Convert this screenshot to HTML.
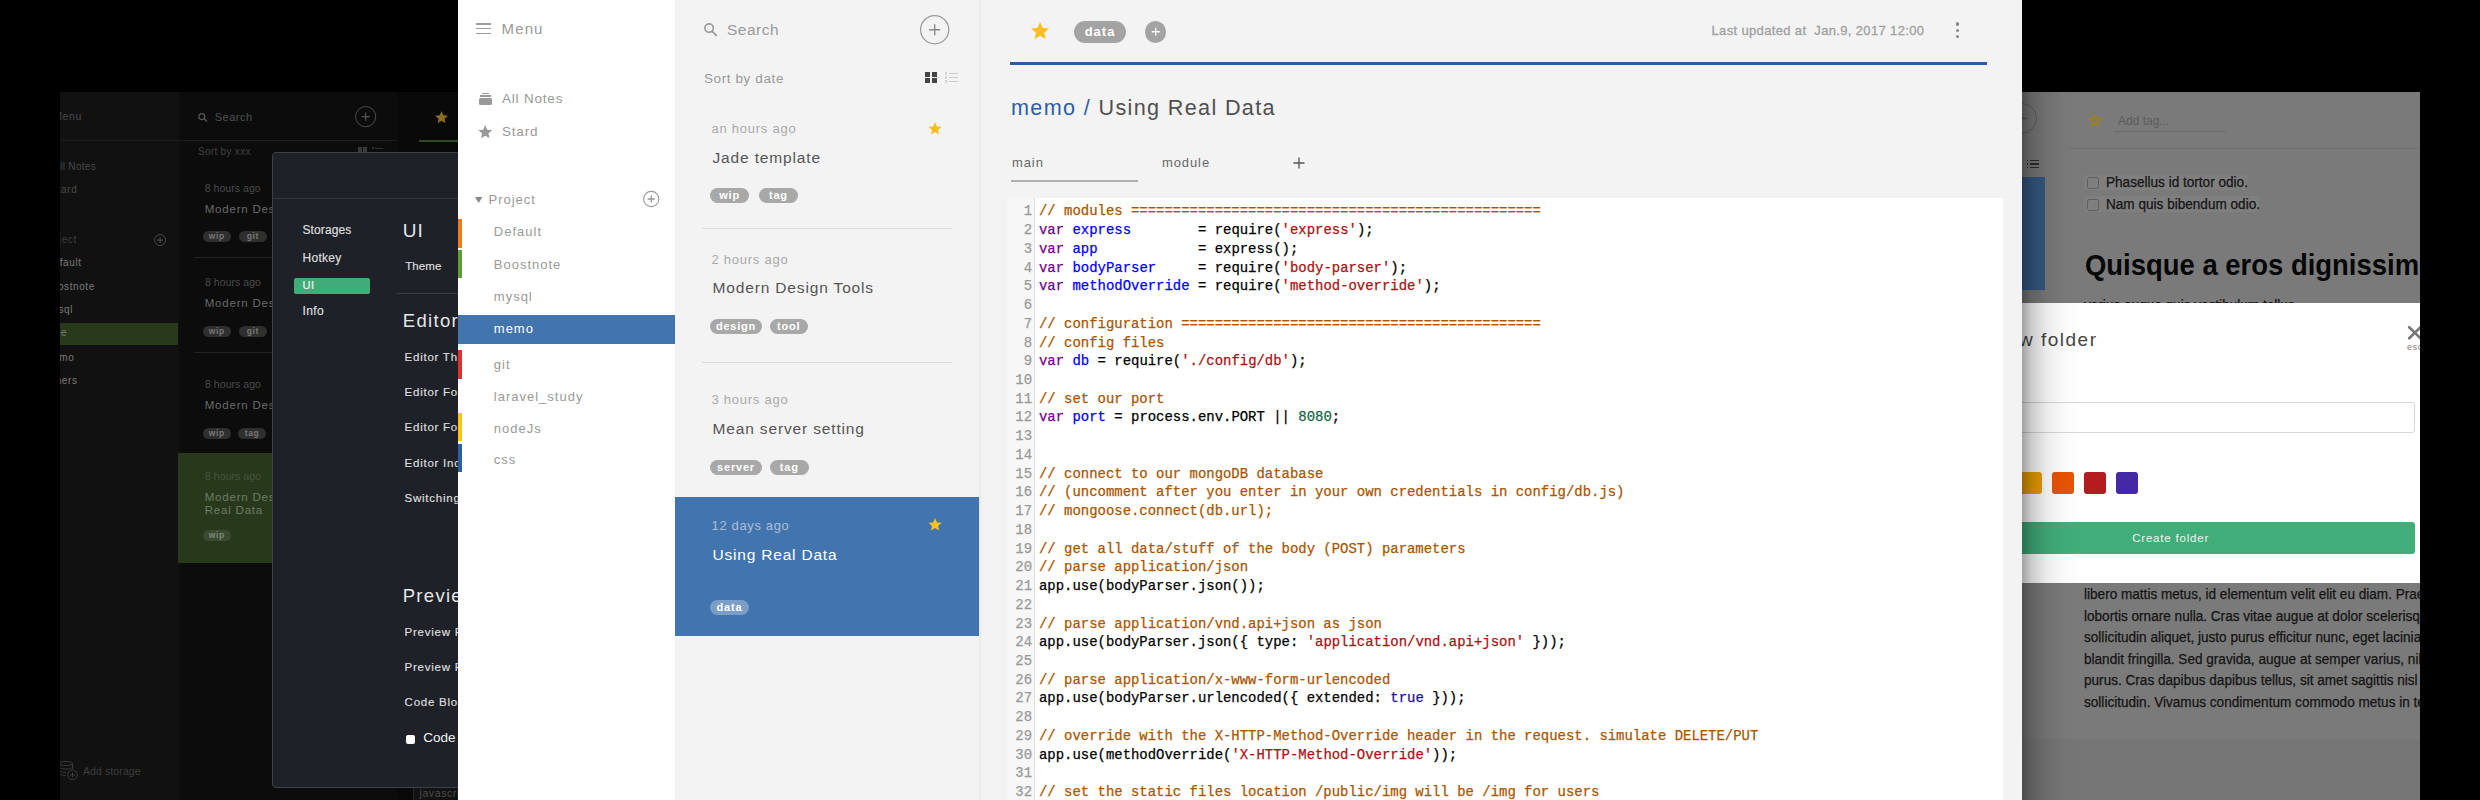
<!DOCTYPE html>
<html><head><meta charset="utf-8">
<style>
*{box-sizing:border-box;margin:0;padding:0}
html,body{width:2480px;height:800px;overflow:hidden;background:#000}
body{position:relative;font-family:"Liberation Sans",sans-serif}
.a{position:absolute}
.t{position:absolute;white-space:nowrap;line-height:1}
svg{position:absolute;overflow:visible}
/* middle */
#mid{left:458px;top:0;width:1564px;height:800px;background:#f3f3f3;overflow:hidden}
#side{left:0;top:0;width:217px;height:800px;background:#fff}
#list{left:217px;top:0;width:304px;height:800px;background:#f3f3f3;box-shadow:1px 0 3px rgba(0,0,0,.08)}
#dark{left:60px;top:92px;width:398px;height:708px;background:#0f0f0f;overflow:hidden}
#right{left:2022px;top:92px;width:398px;height:708px;background:#7a7a7a;overflow:hidden}
.code{font-family:"Liberation Mono",monospace;font-size:13.95px;line-height:18.74px;white-space:pre;color:#000;-webkit-text-stroke:0.25px}
.cm-c{color:#a50}.cm-k{color:#708}.cm-d{color:#00f}.cm-s{color:#a11}.cm-n{color:#164}.cm-a{color:#219}
.tag{position:absolute;height:15px;border-radius:8px;background:#a8a8a8;color:#fff;font-weight:bold;font-size:11px;line-height:15px;text-align:center;letter-spacing:.8px}
</style></head><body>

<!-- ================= DARK LEFT ================= -->
<div id="dark" class="a">
<div class="a" style="left:0.00px;top:0.00px;width:119.00px;height:708.00px;background:#111111;"></div><div class="a" style="left:119.00px;top:0.00px;width:218.00px;height:708.00px;background:#0c0c0c;"></div><div class="a" style="left:337.00px;top:0.00px;width:61.00px;height:708.00px;background:#090909;"></div><div class="a" style="left:0.00px;top:48.00px;width:337.00px;height:1.00px;background:#1c1c1c;"></div>
<div class="a" style="left:359.00px;top:48.00px;width:39.00px;height:2.00px;background:#2f4a1f;"></div>
<div class="t" style="right:376.10px;top:19.11px;font-size:10.5px;color:#4a4a4a;letter-spacing:0.6px;font-weight:normal;text-align:right">Menu</div>
<div class="t" style="right:362.00px;top:70.03px;font-size:10px;color:#474747;letter-spacing:0.3px;font-weight:normal;text-align:right">All Notes</div>
<div class="t" style="right:380.70px;top:93.28px;font-size:10px;color:#4a4a4a;letter-spacing:0.6px;font-weight:normal;text-align:right">Stard</div>
<div class="t" style="right:381.20px;top:143.23px;font-size:10px;color:#3e3e3e;letter-spacing:0.6px;font-weight:normal;text-align:right">Project</div>
<svg style="left:93.80000000000001px;top:141.5px" width="12.2" height="12.2"><circle cx="6.1" cy="6.1" r="5.5" fill="none" stroke="#4a4a4a" stroke-width="1"/><path d="M3.3 6.1H8.9M6.1 3.3V8.9" stroke="#4a4a4a" stroke-width="1.1"/></svg>
<div class="a" style="left:0.00px;top:231.10px;width:117.50px;height:21.50px;background:#283a1b;"></div>
<div class="t" style="right:376.40px;top:165.94px;font-size:10px;color:#7a7a7a;letter-spacing:0.6px;font-weight:normal;text-align:right">Default</div>
<div class="t" style="right:363.10px;top:189.54px;font-size:10px;color:#7a7a7a;letter-spacing:0.6px;font-weight:normal;text-align:right">Boostnote</div>
<div class="t" style="right:385.00px;top:212.54px;font-size:10px;color:#7a7a7a;letter-spacing:0.6px;font-weight:normal;text-align:right">mysql</div>
<div class="t" style="right:390.90px;top:236.04px;font-size:10px;color:#7a7a7a;letter-spacing:0.6px;font-weight:normal;text-align:right">Jade</div>
<div class="t" style="right:383.70px;top:260.54px;font-size:10px;color:#7a7a7a;letter-spacing:0.6px;font-weight:normal;text-align:right">memo</div>
<div class="t" style="right:380.50px;top:284.24px;font-size:10px;color:#7a7a7a;letter-spacing:0.6px;font-weight:normal;text-align:right">Others</div>
<svg style="left:-2px;top:668.6px" width="20" height="20" viewBox="0 0 20 20"><g fill="none" stroke="#3c3c3c" stroke-width="1"><ellipse cx="8" cy="2.5" rx="6.5" ry="2"/><path d="M1.5 2.5V12.5C1.5 13.6 4.5 14.5 8 14.5M14.5 2.5V8M1.5 6C1.5 7.1 4.5 8 8 8S14.5 7.1 14.5 6M1.5 9.5C1.5 10.6 4.5 11.5 8 11.5"/><circle cx="14.5" cy="14" r="4.8"/><path d="M12 14H17M14.5 11.5V16.5"/></g></svg>
<div class="t" style="left:23.00px;top:673.91px;font-size:10.5px;color:#3e3e3e;letter-spacing:0.1px;font-weight:normal;">Add storage</div>
<svg style="left:138px;top:21px" width="10" height="9" viewBox="0 0 10 9"><circle cx="3.8" cy="3.6" r="3" fill="none" stroke="#555" stroke-width="1.3"/><path d="M6 5.8L9 8.6" stroke="#555" stroke-width="1.4"/></svg>
<div class="t" style="left:154.70px;top:19.69px;font-size:11px;color:#505050;letter-spacing:0.5px;font-weight:normal;">Search</div>
<svg style="left:294.5px;top:14px" width="21.3" height="21.3"><circle cx="10.65" cy="10.65" r="10.1" fill="none" stroke="#4e4e4e" stroke-width="1"/><path d="M6.6 10.65H14.7M10.65 6.6V14.7" stroke="#555" stroke-width="1.2"/></svg>
<div class="t" style="left:138.00px;top:55.03px;font-size:10px;color:#404040;letter-spacing:0.3px;font-weight:normal;">Sort by xxx</div>
<div class="a" style="left:298.00px;top:55.00px;width:4.00px;height:5.00px;background:#3a3a3a;"></div><div class="a" style="left:303.00px;top:55.00px;width:4.00px;height:5.00px;background:#3a3a3a;"></div><div class="a" style="left:312.00px;top:55.00px;width:2.00px;height:2.00px;background:#303030;"></div><div class="a" style="left:315.00px;top:55.50px;width:8.00px;height:1.00px;background:#303030;"></div>
<div class="t" style="left:144.70px;top:90.81px;font-size:10.5px;color:#4a4a4a;letter-spacing:0.05px;font-weight:normal;">8 hours ago</div>
<div class="t" style="left:144.70px;top:111.57px;font-size:11.5px;color:#6a6a6a;letter-spacing:0.8px;font-weight:normal;">Modern Design Tools</div>
<div class="tag" style="left:142.6px;top:139.4px;width:28.30000000000001px;height:10.599999999999994px;line-height:10.599999999999994px;background:#2f2f2f;color:#777;font-size:8.5px;letter-spacing:.6px">wip</div><div class="tag" style="left:178.7px;top:139.4px;width:28.100000000000023px;height:10.599999999999994px;line-height:10.599999999999994px;background:#2f2f2f;color:#777;font-size:8.5px;letter-spacing:.6px">git</div>
<div class="a" style="left:134.00px;top:164.50px;width:203.00px;height:1.00px;background:#232323;"></div>
<div class="t" style="left:145.00px;top:185.11px;font-size:10.5px;color:#4a4a4a;letter-spacing:0.05px;font-weight:normal;">8 hours ago</div>
<div class="t" style="left:144.70px;top:206.07px;font-size:11.5px;color:#6a6a6a;letter-spacing:0.8px;font-weight:normal;">Modern Design Tools</div>
<div class="tag" style="left:142.6px;top:233.64999999999998px;width:28.200000000000017px;height:11.25px;line-height:11.25px;background:#2f2f2f;color:#777;font-size:8.5px;letter-spacing:.6px">wip</div><div class="tag" style="left:178.6px;top:233.64999999999998px;width:28.50000000000003px;height:11.25px;line-height:11.25px;background:#2f2f2f;color:#777;font-size:8.5px;letter-spacing:.6px">git</div>
<div class="a" style="left:134.00px;top:260.00px;width:203.00px;height:1.00px;background:#232323;"></div>
<div class="t" style="left:145.00px;top:287.41px;font-size:10.5px;color:#4a4a4a;letter-spacing:0.05px;font-weight:normal;">8 hours ago</div>
<div class="t" style="left:144.70px;top:308.27px;font-size:11.5px;color:#6a6a6a;letter-spacing:0.8px;font-weight:normal;">Modern Design Tools</div>
<div class="tag" style="left:142.6px;top:336.2px;width:28.30000000000001px;height:10.800000000000011px;line-height:10.800000000000011px;background:#2f2f2f;color:#777;font-size:8.5px;letter-spacing:.6px">wip</div><div class="tag" style="left:178px;top:336.2px;width:28px;height:10.800000000000011px;line-height:10.800000000000011px;background:#2f2f2f;color:#777;font-size:8.5px;letter-spacing:.6px">tag</div>
<div class="a" style="left:118.00px;top:361.00px;width:219.00px;height:109.60px;background:#27391a;"></div>
<div class="t" style="left:145.00px;top:378.81px;font-size:10.5px;color:#46533c;letter-spacing:0.05px;font-weight:normal;">8 hours ago</div>
<div class="t" style="left:144.70px;top:399.77px;font-size:11.5px;color:#6f7a66;letter-spacing:0.8px;font-weight:normal;">Modern Design Using</div>
<div class="t" style="left:144.70px;top:413.27px;font-size:11.5px;color:#6f7a66;letter-spacing:0.8px;font-weight:normal;">Real Data</div>
<div class="tag" style="left:142.6px;top:437.79999999999995px;width:28.30000000000001px;height:11.100000000000023px;line-height:11.100000000000023px;background:#3b4a30;color:#7e8a74;font-size:8.5px;letter-spacing:.6px">wip</div>
<svg style="left:374.8px;top:19.099999999999994px" width="13.1" height="12.4" viewBox="2 2 20 19.2"><path fill="#8a6d1f" d="M12 17.27L18.18 21l-1.64-7.03L22 9.24l-7.19-.61L12 2 9.19 8.63 2 9.24l5.46 4.73L5.82 21z"/></svg>
<div class="a" style="left:352.5px;top:694px;width:80px;height:30px;border:1px solid #262626;background:#121212"></div><div class="t" style="left:359.50px;top:696.11px;font-size:10.5px;color:#4d4d4d;letter-spacing:0.6px;font-weight:normal;">javascript</div>
<div class="a" style="left:212px;top:59.5px;width:300px;height:636.0px;background:#1e2128;border:1px solid #3c3f46;border-radius:4px"></div>
<div class="a" style="left:213.00px;top:106.20px;width:185.00px;height:1.00px;background:#34373c;"></div>
<div class="a" style="left:233.90px;top:185.90px;width:75.90px;height:15.80px;background:#40ad79;border-radius:2px"></div>
<div class="t" style="left:242.50px;top:132.24px;font-size:12px;color:#dcdcdc;letter-spacing:0.1px;font-weight:normal;-webkit-text-stroke:0.2px">Storages</div>
<div class="t" style="left:242.50px;top:159.54px;font-size:12px;color:#dcdcdc;letter-spacing:0.3px;font-weight:normal;-webkit-text-stroke:0.2px">Hotkey</div>
<div class="t" style="left:242.50px;top:188.29px;font-size:11px;color:#f0f0f0;letter-spacing:0.5px;font-weight:normal;-webkit-text-stroke:0.2px">UI</div>
<div class="t" style="left:242.50px;top:212.64px;font-size:12px;color:#dcdcdc;letter-spacing:0.4px;font-weight:normal;-webkit-text-stroke:0.2px">Info</div>
<div class="t" style="left:342.80px;top:128.72px;font-size:19px;color:#e6e6e6;letter-spacing:1px;font-weight:normal;">UI</div>
<div class="t" style="left:345.20px;top:169.27px;font-size:11.5px;color:#dcdcdc;letter-spacing:0.1px;font-weight:normal;-webkit-text-stroke:0.2px">Theme</div>
<div class="a" style="left:337.10px;top:200.70px;width:60.90px;height:1.00px;background:#3a3c40;"></div>
<div class="t" style="left:342.80px;top:219.64px;font-size:18.5px;color:#e6e6e6;letter-spacing:1.3px;font-weight:normal;">Editor</div>
<div class="t" style="left:344.60px;top:259.67px;font-size:11.5px;color:#dcdcdc;letter-spacing:0.75px;font-weight:normal;-webkit-text-stroke:0.2px">Editor Theme</div>
<div class="t" style="left:344.60px;top:294.97px;font-size:11.5px;color:#dcdcdc;letter-spacing:0.75px;font-weight:normal;-webkit-text-stroke:0.2px">Editor Font Size</div>
<div class="t" style="left:344.60px;top:330.27px;font-size:11.5px;color:#dcdcdc;letter-spacing:0.75px;font-weight:normal;-webkit-text-stroke:0.2px">Editor Font Family</div>
<div class="t" style="left:344.60px;top:365.87px;font-size:11.5px;color:#dcdcdc;letter-spacing:0.75px;font-weight:normal;-webkit-text-stroke:0.2px">Editor Indent Style</div>
<div class="t" style="left:344.60px;top:400.77px;font-size:11.5px;color:#dcdcdc;letter-spacing:0.75px;font-weight:normal;-webkit-text-stroke:0.2px">Switching Preview</div>
<div class="t" style="left:342.70px;top:494.64px;font-size:18.5px;color:#e6e6e6;letter-spacing:1.3px;font-weight:normal;">Preview</div>
<div class="t" style="left:344.60px;top:534.57px;font-size:11.5px;color:#dcdcdc;letter-spacing:0.75px;font-weight:normal;-webkit-text-stroke:0.2px">Preview Font Size</div>
<div class="t" style="left:344.60px;top:569.77px;font-size:11.5px;color:#dcdcdc;letter-spacing:0.75px;font-weight:normal;-webkit-text-stroke:0.2px">Preview Font Family</div>
<div class="t" style="left:344.60px;top:605.47px;font-size:11.5px;color:#dcdcdc;letter-spacing:0.75px;font-weight:normal;-webkit-text-stroke:0.2px">Code Block Theme</div>
<div class="a" style="left:345.50px;top:642.70px;width:9.20px;height:9.00px;background:#ffffff;border-radius:2px"></div>
<div class="t" style="left:363.20px;top:638.87px;font-size:13.5px;color:#f2f2f2;letter-spacing:0px;font-weight:normal;">Code block line numbers</div>
</div>

<!-- ================= MIDDLE ================= -->
<div id="mid" class="a">
  <div id="side" class="a">
<div class="a" style="left:18px;top:23.4px;width:15px;height:1.6px;background:#9c9c9c"></div>
<div class="a" style="left:18px;top:27.9px;width:15px;height:1.6px;background:#9c9c9c"></div>
<div class="a" style="left:18px;top:32.6px;width:15px;height:1.6px;background:#9c9c9c"></div>
<div class="t" style="left:43.60px;top:21.30px;font-size:15px;color:#999;letter-spacing:1.1px;font-weight:normal;">Menu</div>
<div class="a" style="left:24px;top:92.5px;width:7px;height:1.4px;background:#999"></div><div class="a" style="left:22px;top:95.1px;width:10.5px;height:1.5px;background:#999"></div><div class="a" style="left:21px;top:98.1px;width:12.75px;height:7.4px;background:#999;border-radius:1.5px"></div>
<div class="t" style="left:44.00px;top:92.32px;font-size:13.5px;color:#999;letter-spacing:0.8px;font-weight:normal;">All Notes</div>
<svg style="left:20px;top:124.75px" width="14.5" height="13.5" viewBox="2 2 20 19.2"><path fill="#999" d="M12 17.27L18.18 21l-1.64-7.03L22 9.24l-7.19-.61L12 2 9.19 8.63 2 9.24l5.46 4.73L5.82 21z"/></svg>
<div class="t" style="left:44.00px;top:124.97px;font-size:13.5px;color:#999;letter-spacing:0.8px;font-weight:normal;">Stard</div>
<svg style="left:17.2px;top:197.1px" width="7.3" height="6" viewBox="0 0 7.3 6"><path fill="#888" d="M0 0H7.3L3.65 6Z"/></svg>
<div class="t" style="left:30.50px;top:193.40px;font-size:13px;color:#999;letter-spacing:1px;font-weight:normal;">Project</div>
<svg style="left:185px;top:191px" width="16.5" height="16" viewBox="0 0 16.5 16"><circle cx="8.25" cy="8" r="7.6" fill="none" stroke="#999" stroke-width="1.1"/><path d="M4.6 8H11.9M8.25 4.4V11.6" stroke="#999" stroke-width="1.3"/></svg>
<div class="a" style="left:0;top:315px;width:218px;height:29px;background:#4274ae"></div>
<div class="t" style="left:35.80px;top:224.80px;font-size:13px;color:#999;letter-spacing:1px;font-weight:normal;">Default</div>
<div class="t" style="left:35.80px;top:257.70px;font-size:13px;color:#999;letter-spacing:1px;font-weight:normal;">Boostnote</div>
<div class="t" style="left:35.80px;top:290.20px;font-size:13px;color:#999;letter-spacing:1px;font-weight:normal;">mysql</div>
<div class="t" style="left:35.80px;top:322.30px;font-size:13px;color:#fff;letter-spacing:1px;font-weight:normal;">memo</div>
<div class="t" style="left:35.80px;top:358.30px;font-size:13px;color:#999;letter-spacing:1px;font-weight:normal;">git</div>
<div class="t" style="left:35.80px;top:389.75px;font-size:13px;color:#999;letter-spacing:1px;font-weight:normal;">laravel_study</div>
<div class="t" style="left:35.80px;top:421.50px;font-size:13px;color:#999;letter-spacing:1px;font-weight:normal;">nodeJs</div>
<div class="t" style="left:35.80px;top:452.75px;font-size:13px;color:#999;letter-spacing:1px;font-weight:normal;">css</div>
<div class="a" style="left:0;top:218.75px;width:3.5px;height:28.75px;background:#f07c1b"></div>
<div class="a" style="left:0;top:250px;width:3.5px;height:27.5px;background:#5a9e35"></div>
<div class="a" style="left:0;top:349.5px;width:3.5px;height:29.25px;background:#e0302e"></div>
<div class="a" style="left:0;top:412.5px;width:3.5px;height:28.5px;background:#fcc419"></div>
<div class="a" style="left:0;top:443.75px;width:3.5px;height:28.0px;background:#2d5fa8"></div>
</div>
  <div id="list" class="a">
<svg style="left:29px;top:23.3px" width="13" height="13.2" viewBox="0 0 13 13.2"><circle cx="5.1" cy="5.1" r="4.2" fill="none" stroke="#999" stroke-width="1.6"/><path d="M8.2 8.3L12.2 12.4" stroke="#999" stroke-width="1.8" stroke-linecap="round"/></svg>
<div class="t" style="left:52.00px;top:22.38px;font-size:15.5px;color:#9a9a9a;letter-spacing:0.5px;font-weight:normal;">Search</div>
<svg style="left:245.2px;top:15.1px" width="29.4" height="29.4" viewBox="0 0 29.4 29.4"><circle cx="14.7" cy="14.7" r="14.1" fill="none" stroke="#9a9a9a" stroke-width="1.2"/><path d="M9.2 14.7H20.2M14.7 9.2V20.2" stroke="#888" stroke-width="1.4"/></svg>
<div class="t" style="left:29.00px;top:71.67px;font-size:13.5px;color:#999;letter-spacing:0.6px;font-weight:normal;">Sort by date</div>
<div class="a" style="left:250px;top:71.8px;width:5.3px;height:5.2px;background:#444"></div><div class="a" style="left:250px;top:77.8px;width:5.3px;height:5.2px;background:#444"></div><div class="a" style="left:256.5px;top:71.8px;width:5.3px;height:5.2px;background:#444"></div><div class="a" style="left:256.5px;top:77.8px;width:5.3px;height:5.2px;background:#444"></div>
<div class="a" style="left:269.5px;top:72.2px;width:2.6px;height:2.6px;border:0.6px solid #ccc;border-radius:50%"></div><div class="a" style="left:274px;top:73.10000000000001px;width:9px;height:1px;background:#ccc"></div><div class="a" style="left:269.5px;top:76.2px;width:2.6px;height:2.6px;border:0.6px solid #ccc;border-radius:50%"></div><div class="a" style="left:274px;top:77.10000000000001px;width:9px;height:1px;background:#ccc"></div><div class="a" style="left:269.5px;top:80.2px;width:2.6px;height:2.6px;border:0.6px solid #ccc;border-radius:50%"></div><div class="a" style="left:274px;top:81.10000000000001px;width:9px;height:1px;background:#ccc"></div>
<div class="t" style="left:36.50px;top:121.90px;font-size:13px;color:#aaa;letter-spacing:0.75px;font-weight:normal;">an hours ago</div>
<svg style="left:252.75px;top:121.9px" width="14.15" height="12.7" viewBox="2 2 20 19.2"><path fill="#fbbd1d" d="M12 17.27L18.18 21l-1.64-7.03L22 9.24l-7.19-.61L12 2 9.19 8.63 2 9.24l5.46 4.73L5.82 21z"/></svg>
<div class="t" style="left:37.50px;top:149.98px;font-size:15.5px;color:#555;letter-spacing:0.85px;font-weight:normal;">Jade template</div>
<div class="tag" style="left:35.25px;top:188.1px;width:38.75px;height:15.0px;line-height:15.0px;background:#a8a8a8">wip</div>
<div class="tag" style="left:84px;top:188.1px;width:38.900000000000006px;height:15.0px;line-height:15.0px;background:#a8a8a8">tag</div>
<div class="a" style="left:26.5px;top:227.5px;width:250.5px;height:1px;background:#dcdcdc"></div>
<div class="t" style="left:36.50px;top:252.60px;font-size:13px;color:#aaa;letter-spacing:0.75px;font-weight:normal;">2 hours ago</div>
<div class="t" style="left:37.50px;top:280.48px;font-size:15.5px;color:#555;letter-spacing:0.85px;font-weight:normal;">Modern Design Tools</div>
<div class="tag" style="left:35px;top:318.6px;width:52px;height:15.399999999999977px;line-height:15.399999999999977px;background:#a8a8a8">design</div>
<div class="tag" style="left:95px;top:318.6px;width:37.5px;height:15.399999999999977px;line-height:15.399999999999977px;background:#a8a8a8">tool</div>
<div class="a" style="left:26.5px;top:362.2px;width:250.5px;height:1px;background:#dcdcdc"></div>
<div class="t" style="left:36.50px;top:393.00px;font-size:13px;color:#aaa;letter-spacing:0.75px;font-weight:normal;">3 hours ago</div>
<div class="t" style="left:37.50px;top:420.88px;font-size:15.5px;color:#555;letter-spacing:0.85px;font-weight:normal;">Mean server setting</div>
<div class="tag" style="left:35px;top:459.5px;width:52px;height:15.5px;line-height:15.5px;background:#a8a8a8">server</div>
<div class="tag" style="left:95px;top:459.5px;width:38.599999999999994px;height:15.5px;line-height:15.5px;background:#a8a8a8">tag</div>
<div class="a" style="left:0;top:497px;width:304px;height:138.7px;background:#4274ae"></div>
<div class="t" style="left:36.50px;top:519.00px;font-size:13px;color:rgba(255,255,255,.55);letter-spacing:0.65px;font-weight:normal;">12 days ago</div>
<svg style="left:252.75px;top:518px" width="14.15" height="12.7" viewBox="2 2 20 19.2"><path fill="#fbc21d" d="M12 17.27L18.18 21l-1.64-7.03L22 9.24l-7.19-.61L12 2 9.19 8.63 2 9.24l5.46 4.73L5.82 21z"/></svg>
<div class="t" style="left:37.50px;top:546.88px;font-size:15.5px;color:#fff;letter-spacing:0.8px;font-weight:normal;">Using Real Data</div>
<div class="tag" style="left:35px;top:600px;width:39px;height:15px;line-height:15px;background:rgba(255,255,255,.3)">data</div>
</div>
  <div id="editor" class="a" style="left:521px;top:0;width:1043px;height:800px">
<svg style="left:52px;top:21.8px" width="18.2" height="17.3" viewBox="2 2 20 19.2"><path fill="#fcbf1a" d="M12 17.27L18.18 21l-1.64-7.03L22 9.24l-7.19-.61L12 2 9.19 8.63 2 9.24l5.46 4.73L5.82 21z"/></svg>
<div class="tag" style="left:95px;top:21.2px;width:52px;height:21.4px;line-height:21.4px;border-radius:11px;font-size:13px;letter-spacing:1px;background:#a3a3a3">data</div>
<div class="a" style="left:165.5px;top:21px;width:21.5px;height:21.5px;border-radius:50%;background:#a3a3a3"></div><svg style="left:165.5px;top:21px" width="21.5" height="21.5"><path d="M6.7 10.75H14.8M10.75 6.7V14.8" stroke="#fff" stroke-width="1.3"/></svg>
<div class="t" style="left:732.50px;top:23.50px;font-size:13px;color:#a0a0a0;letter-spacing:0.35px;font-weight:normal;-webkit-text-stroke:0.3px">Last updated at&nbsp; Jan.9, 2017 12:00</div>
<div class="a" style="left:976.5px;top:22.4px;width:3.2px;height:3.2px;border-radius:50%;background:#888"></div><div class="a" style="left:976.5px;top:28.799999999999997px;width:3.2px;height:3.2px;border-radius:50%;background:#888"></div><div class="a" style="left:976.5px;top:35.1px;width:3.2px;height:3.2px;border-radius:50%;background:#888"></div>
<div class="a" style="left:30.700000000000045px;top:62px;width:977px;height:3px;background:#2c5ba5"></div>
<div class="t" style="left:32.00px;top:97.22px;font-size:21.6px;color:#505050;letter-spacing:1.35px;font-weight:normal;"><span style="color:#2d5ea6">memo /</span> Using Real Data</div>
<div class="t" style="left:33.00px;top:156.00px;font-size:13px;color:#686868;letter-spacing:0.9px;font-weight:normal;">main</div>
<div class="t" style="left:183.00px;top:156.00px;font-size:13px;color:#686868;letter-spacing:0.9px;font-weight:normal;">module</div>
<svg style="left:314px;top:157px" width="12" height="12"><path d="M0.5 6H11.5M6 0.5V11.5" stroke="#555" stroke-width="1.3"/></svg>
<div class="a" style="left:32px;top:180px;width:127px;height:2px;background:#b0b0b0"></div>
<div class="a" style="left:28px;top:198px;width:28px;height:602px;background:#f7f7f7;border-right:1px solid #ddd"></div>
<div class="a" style="left:56px;top:198px;width:968px;height:602px;background:#fff"></div>
<div class="a code" style="left:28px;top:202.4px;width:25px;text-align:right;color:#999">1
2
3
4
5
6
7
8
9
10
11
12
13
14
15
16
17
18
19
20
21
22
23
24
25
26
27
28
29
30
31
32</div>
<div class="a code" style="left:60px;top:202.4px"><span class="cm-c">// modules =================================================</span>
<span class="cm-k">var</span> <span class="cm-d">express</span>        = require(<span class="cm-s">'express'</span>);
<span class="cm-k">var</span> <span class="cm-d">app</span>            = express();
<span class="cm-k">var</span> <span class="cm-d">bodyParser</span>     = require(<span class="cm-s">'body-parser'</span>);
<span class="cm-k">var</span> <span class="cm-d">methodOverride</span> = require(<span class="cm-s">'method-override'</span>);

<span class="cm-c">// configuration ===========================================</span>
<span class="cm-c">// config files</span>
<span class="cm-k">var</span> <span class="cm-d">db</span> = require(<span class="cm-s">'./config/db'</span>);

<span class="cm-c">// set our port</span>
<span class="cm-k">var</span> <span class="cm-d">port</span> = process.env.PORT || <span class="cm-n">8080</span>;


<span class="cm-c">// connect to our mongoDB database</span>
<span class="cm-c">// (uncomment after you enter in your own credentials in config/db.js)</span>
<span class="cm-c">// mongoose.connect(db.url);</span>

<span class="cm-c">// get all data/stuff of the body (POST) parameters</span>
<span class="cm-c">// parse application/json</span>
app.use(bodyParser.json());

<span class="cm-c">// parse application/vnd.api+json as json</span>
app.use(bodyParser.json({ type: <span class="cm-s">'application/vnd.api+json'</span> }));

<span class="cm-c">// parse application/x-www-form-urlencoded</span>
app.use(bodyParser.urlencoded({ extended: <span class="cm-a">true</span> }));

<span class="cm-c">// override with the X-HTTP-Method-Override header in the request. simulate DELETE/PUT</span>
app.use(methodOverride(<span class="cm-s">'X-HTTP-Method-Override'</span>));

<span class="cm-c">// set the static files location /public/img will be /img for users</span></div>
</div>
</div>

<!-- ================= RIGHT ================= -->
<div id="right" class="a">
<div class="a" style="left:0.00px;top:646.80px;width:398.00px;height:61.20px;background:#767676;"></div>
<svg style="left:-16px;top:10.5px" width="31" height="31"><circle cx="15.5" cy="15.5" r="15" fill="none" stroke="#606060" stroke-width="1"/><path d="M10.5 15.5H20.5M15.5 10.5V20.5" stroke="#555" stroke-width="1.5"/></svg>
<div class="a" style="left:4.50px;top:67.50px;width:1.80px;height:1.60px;background:#2e2e2e;"></div><div class="a" style="left:8.00px;top:67.50px;width:8.70px;height:1.50px;background:#2e2e2e;"></div><div class="a" style="left:4.50px;top:71.20px;width:1.80px;height:1.60px;background:#2e2e2e;"></div><div class="a" style="left:8.00px;top:71.20px;width:8.70px;height:1.50px;background:#2e2e2e;"></div><div class="a" style="left:4.50px;top:74.90px;width:1.80px;height:1.60px;background:#2e2e2e;"></div><div class="a" style="left:8.00px;top:74.90px;width:8.70px;height:1.50px;background:#2e2e2e;"></div>
<div class="a" style="left:0.00px;top:85.30px;width:22.70px;height:112.30px;background:#355a84;"></div>
<svg style="left:66.90000000000009px;top:22px" width="12.2" height="12.3" viewBox="-1 -1 26 25"><path fill="none" stroke="#a47d1c" stroke-width="3" stroke-linejoin="round" d="M12 0 L15 8.2 L24 8.6 L17 14.2 L19.4 23 L12 18 L4.6 23 L7 14.2 L0 8.6 L9 8.2Z"/></svg>
<div class="t" style="left:96.00px;top:22.84px;font-size:12px;color:#5c5c5c;letter-spacing:0px;font-weight:normal;">Add tag...</div>
<div class="a" style="left:92.00px;top:39.00px;width:111.70px;height:1.00px;background:#6c6c6c;"></div><div class="a" style="left:47.40px;top:56.10px;width:350.60px;height:1.00px;background:#707070;"></div>
<div class="a" style="left:62.00px;top:83.30px;width:163.00px;height:14.50px;background:#7f7f7f;"></div><div class="a" style="left:62.00px;top:103.80px;width:174.50px;height:15.80px;background:#7f7f7f;"></div>
<div class="a" style="left:64.59999999999991px;top:85.4px;width:12.3px;height:11.9px;border:1px solid #5e5e5e;border-radius:2.5px"></div><div class="a" style="left:64.59999999999991px;top:107px;width:12.3px;height:11.9px;border:1px solid #5e5e5e;border-radius:2.5px"></div>
<div class="t" style="left:83.50px;top:83.35px;font-size:14px;color:#151515;letter-spacing:0px;font-weight:normal;-webkit-text-stroke:0.25px;transform:scaleX(.97);transform-origin:0 0">Phasellus id tortor odio.</div>
<div class="t" style="left:83.50px;top:104.55px;font-size:14px;color:#151515;letter-spacing:0px;font-weight:normal;-webkit-text-stroke:0.25px;transform:scaleX(.97);transform-origin:0 0">Nam quis bibendum odio.</div>
<div class="t" style="left:62.70px;top:158.00px;font-size:30px;color:#060606;letter-spacing:0px;font-weight:bold;transform:scaleX(.915);transform-origin:0 0">Quisque a eros dignissim</div>
<div class="t" style="left:61.90px;top:205.65px;font-size:14px;color:#141414;letter-spacing:0px;font-weight:normal;-webkit-text-stroke:0.25px;transform:scaleX(.97);transform-origin:0 0">varius augue quis vestibulum tellus</div>
<div class="t" style="left:62.10px;top:495.05px;font-size:14px;color:#141414;letter-spacing:0px;font-weight:normal;-webkit-text-stroke:0.25px;transform:scaleX(.97);transform-origin:0 0">libero mattis metus, id elementum velit elit eu diam. Praesent</div>
<div class="t" style="left:62.10px;top:516.55px;font-size:14px;color:#141414;letter-spacing:0px;font-weight:normal;-webkit-text-stroke:0.25px;transform:scaleX(.97);transform-origin:0 0">lobortis ornare nulla. Cras vitae augue at dolor scelerisque</div>
<div class="t" style="left:62.10px;top:538.05px;font-size:14px;color:#141414;letter-spacing:0px;font-weight:normal;-webkit-text-stroke:0.25px;transform:scaleX(.97);transform-origin:0 0">sollicitudin aliquet, justo purus efficitur nunc, eget lacinia</div>
<div class="t" style="left:62.10px;top:559.55px;font-size:14px;color:#141414;letter-spacing:0px;font-weight:normal;-webkit-text-stroke:0.25px;transform:scaleX(.97);transform-origin:0 0">blandit fringilla. Sed gravida, augue at semper varius, nibh</div>
<div class="t" style="left:62.10px;top:581.05px;font-size:14px;color:#141414;letter-spacing:0px;font-weight:normal;-webkit-text-stroke:0.25px;transform:scaleX(.97);transform-origin:0 0">purus. Cras dapibus dapibus tellus, sit amet sagittis nisl pretium</div>
<div class="t" style="left:62.10px;top:602.55px;font-size:14px;color:#141414;letter-spacing:0px;font-weight:normal;-webkit-text-stroke:0.25px;transform:scaleX(.97);transform-origin:0 0">sollicitudin. Vivamus condimentum commodo metus in tempus</div>
<div class="a" style="left:0.00px;top:211.00px;width:398.00px;height:280.00px;background:#ffffff;"></div>
<div class="t" style="right:322.50px;top:238.42px;font-size:19px;color:#464646;letter-spacing:1.5px;font-weight:normal;text-align:right;">New folder</div>
<svg style="left:386.4000000000001px;top:233.60000000000002px" width="14" height="14"><path d="M1.2 1.2L12.5 12.3M12.5 1.2L1.2 12.3" stroke="#777" stroke-width="2.6" stroke-linecap="round"/></svg>
<div class="t" style="left:384.90px;top:250.98px;font-size:9px;color:#808080;letter-spacing:0.5px;font-weight:normal;">esc</div>
<div class="a" style="left:-32px;top:309.7px;width:424.5px;height:31.2px;border:1px solid #d8d8d8;border-radius:3px"></div>
<div class="a" style="left:-1.60px;top:380.20px;width:21.50px;height:21.50px;background:#eda200;border-radius:3px"></div><div class="a" style="left:30.30px;top:380.20px;width:21.50px;height:21.50px;background:#e85400;border-radius:3px"></div><div class="a" style="left:62.20px;top:380.20px;width:21.50px;height:21.50px;background:#b51c1f;border-radius:3px"></div><div class="a" style="left:94.00px;top:380.20px;width:21.50px;height:21.50px;background:#4528a6;border-radius:3px"></div>
<div class="a" style="left:-32.00px;top:430.20px;width:424.50px;height:31.70px;background:#41ae7a;border-radius:3px"></div>
<div class="t" style="left:110.20px;top:441.27px;font-size:11.5px;color:#f2f2f2;letter-spacing:0.8px;font-weight:normal;">Create folder</div>
<div class="a" style="left:0;top:0;width:60px;height:708px;background:linear-gradient(to right,rgba(0,0,0,.36),rgba(0,0,0,.2) 10px,rgba(0,0,0,.08) 25px,rgba(0,0,0,.02) 42px,rgba(0,0,0,0) 60px)"></div>
</div>

</body></html>
